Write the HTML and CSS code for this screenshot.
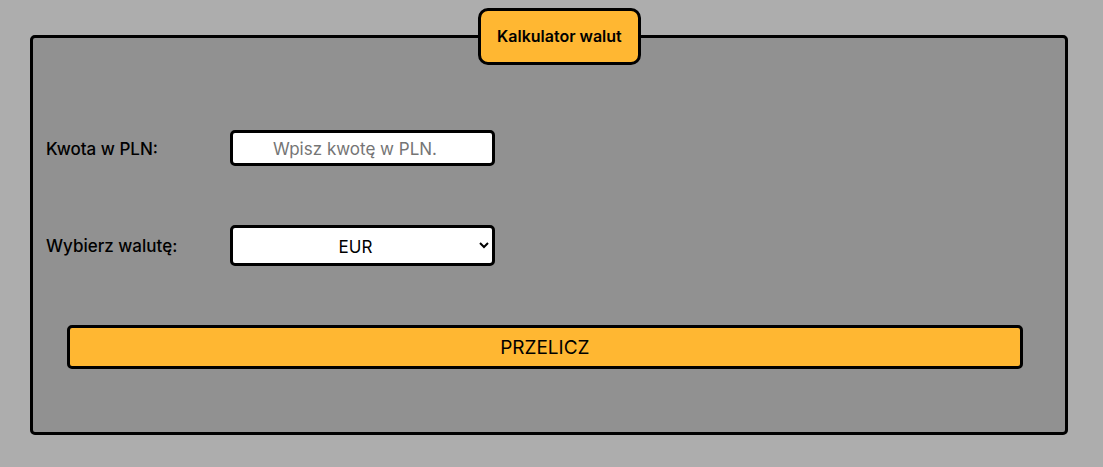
FILE: index.html
```html
<!DOCTYPE html>
<html lang="pl">
<head>
<meta charset="utf-8">
<meta name="viewport" content="width=device-width, initial-scale=1">
<title>Kalkulator walut</title>
<link rel="stylesheet" href="styles.css">
</head>
<body class="page">
<form class="form">
<fieldset class="form__fieldset">
<legend class="form__legend">Kalkulator walut</legend>
<div class="form__row">
<label class="form__label" for="amount">Kwota w PLN:</label>
<input class="form__field" id="amount" type="number" min="0" step="0.01" placeholder="Wpisz kwotę w PLN.">
</div>
<div class="form__row">
<label class="form__label" for="currency">Wybierz walutę:</label>
<select class="form__field form__field--select" id="currency">
<option>EUR</option>
<option>USD</option>
<option>GBP</option>
</select>
</div>
<button class="form__button" type="button">PRZELICZ</button>
</fieldset>
</form>
</body>
</html>
```
FILE: styles.css
```css
* {
  box-sizing: border-box;
}

.page {
  margin: 0;
  background: #adadad;
  color: #000;
  font-family: Inter, "Liberation Sans", sans-serif;
  font-size: 17px;
}

.form {
  padding: 8px 35px 32px 30px;
}

.form__fieldset {
  margin: 0;
  padding: 65px 13px 63px;
  border: 3px solid #000;
  border-radius: 5px;
  background: #919191;
}

.form__legend {
  margin-left: calc(50% - 71px);
  padding: 15px 16px;
  border: 3px solid #000;
  border-radius: 10px;
  background: #ffb732;
  font-size: 16px;
  font-weight: 600;
  line-height: 21px;
}

.form__row {
  display: flex;
  align-items: center;
  margin-bottom: 59px;
}

.form__label {
  width: 184px;
  padding-top: 1px;
  font-weight: 500;
}

.form__field {
  width: 265px;
  height: 36px;
  padding: 5px 4px 3px;
  border: 3px solid #000;
  border-radius: 5px;
  background: #fff;
  color: #000;
  font: inherit;
  text-align: center;
}

.form__field::placeholder {
  color: #757575;
}

.form__field--select {
  height: 41px;
  padding: 5px 2px 3px 0;
}

.form__button {
  display: block;
  width: 95%;
  height: 44px;
  margin-left: 21px;
  border: 3px solid #000;
  border-radius: 5px;
  background: #ffb732;
  color: #000;
  font: inherit;
  font-size: 19px;
}
```
